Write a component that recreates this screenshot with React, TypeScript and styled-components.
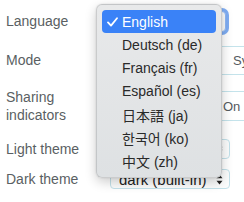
import { createGlobalStyle } from 'styled-components'
import styled from 'styled-components'

const GlobalStyle = createGlobalStyle`
  html, body {
    margin: 0;
    padding: 0;
    background: #ffffff;
  }
  body {
    font-family: 'Liberation Sans', Arial, 'Noto Sans CJK JP', sans-serif;
    -webkit-font-smoothing: antialiased;
  }
`

const Page = styled.div`
  position: relative;
  width: 244px;
  height: 202px;
  overflow: hidden;
`

const Form = styled.div`
  display: grid;
  grid-template-columns: 110px 1fr;
  grid-template-rows: 30px 48px 44px 41px 20px;
  align-items: center;
  padding-top: 6px;
`

const Label = styled.div`
  padding-left: 6px;
  font-size: 14px;
  line-height: 18px;
  color: #5a5f63;
`

const SelectBox = styled.div<{ $focused?: boolean }>`
  display: flex;
  align-items: center;
  justify-content: space-between;
  width: 120px;
  height: 20px;
  box-sizing: border-box;
  padding: 0 6px 0 8px;
  border: 1px solid #c2e1ea;
  border-radius: 4px;
  background: #fbfcfc;
  font-size: 15px;
  color: #222;
  ${({ $focused }) =>
    $focused &&
    `
    width: 116px;
    height: 21px;
    border-color: #8fb8f5;
    box-shadow: 0 0 0 3px #7fadf3;
  `}
`

const Segmented = styled.div`
  display: flex;
  width: 220px;
  box-sizing: border-box;
  border-top: 1px solid #c4e3eb;
  border-bottom: 1px solid #c4e3eb;
  border-left: 1px solid #c4e3eb;
  border-radius: 4px 0 0 4px;
  font-size: 13px;
  color: #555a5e;
`

const Segment = styled.div<{ $width: number; $height: number }>`
  display: flex;
  align-items: center;
  width: ${({ $width }) => $width}px;
  height: ${({ $height }) => $height}px;
  padding-left: 8px;
  box-sizing: border-box;
  flex-shrink: 0;
`

const Menu = styled.div`
  position: absolute;
  left: 96px;
  top: 4px;
  width: 126px;
  box-sizing: border-box;
  padding: 5px 5px 4px;
  border-radius: 6px;
  border: 1px solid rgba(0, 0, 0, 0.12);
  background: linear-gradient(#e8e9ea, #dee1e3);
  box-shadow: 0 4px 12px rgba(0, 0, 0, 0.2), 0 0 2px rgba(0, 0, 0, 0.12);
`

const MenuItem = styled.div<{ $active?: boolean }>`
  display: flex;
  align-items: center;
  height: 23.25px;
  border-radius: 4px;
  font-size: 14px;
  color: ${({ $active }) => ($active ? '#ffffff' : '#2a2a2a')};
  background: ${({ $active }) => ($active ? '#3a82f7' : 'transparent')};
`

const Check = styled.span`
  display: flex;
  justify-content: center;
  width: 20px;
`

const ArrowIcon = () => (
  <svg width="7" height="11" viewBox="0 0 7 11">
    <path d="M3.5 0.5 L6.5 4.2 L0.5 4.2 Z" fill="#222" />
    <path d="M3.5 10.5 L6.5 6.8 L0.5 6.8 Z" fill="#222" />
  </svg>
)

const languages = [
  'English',
  'Deutsch (de)',
  'Français (fr)',
  'Español (es)',
  '日本語 (ja)',
  '한국어 (ko)',
  '中文 (zh)',
]

export default function App() {
  return (
    <Page>
      <GlobalStyle />
      <Form>
        <Label>Language</Label>
        <SelectBox $focused>
          <span />
          <ArrowIcon />
        </SelectBox>

        <Label>Mode</Label>
        <Segmented>
          <Segment $width={114} $height={27} />
          <Segment $width={100} $height={27}>System</Segment>
        </Segmented>

        <Label>
          Sharing
          <br />
          indicators
        </Label>
        <Segmented>
          <Segment $width={104} $height={28} />
          <Segment $width={100} $height={28}>On</Segment>
        </Segmented>

        <Label>Light theme</Label>
        <SelectBox>
          <span />
          <ArrowIcon />
        </SelectBox>

        <Label>Dark theme</Label>
        <SelectBox>
          <span>dark (built-in)</span>
          <ArrowIcon />
        </SelectBox>
      </Form>

      <Menu>
        {languages.map((lang, i) => (
          <MenuItem key={lang} $active={i === 0}>
            <Check>
              {i === 0 && (
                <svg width="11" height="10" viewBox="0 0 11 10">
                  <path
                    d="M1 5.4 L4 8.6 L10 1.2"
                    fill="none"
                    stroke="#fff"
                    strokeWidth="1.8"
                    strokeLinecap="round"
                    strokeLinejoin="round"
                  />
                </svg>
              )}
            </Check>
            <span>{lang}</span>
          </MenuItem>
        ))}
      </Menu>
    </Page>
  )
}
